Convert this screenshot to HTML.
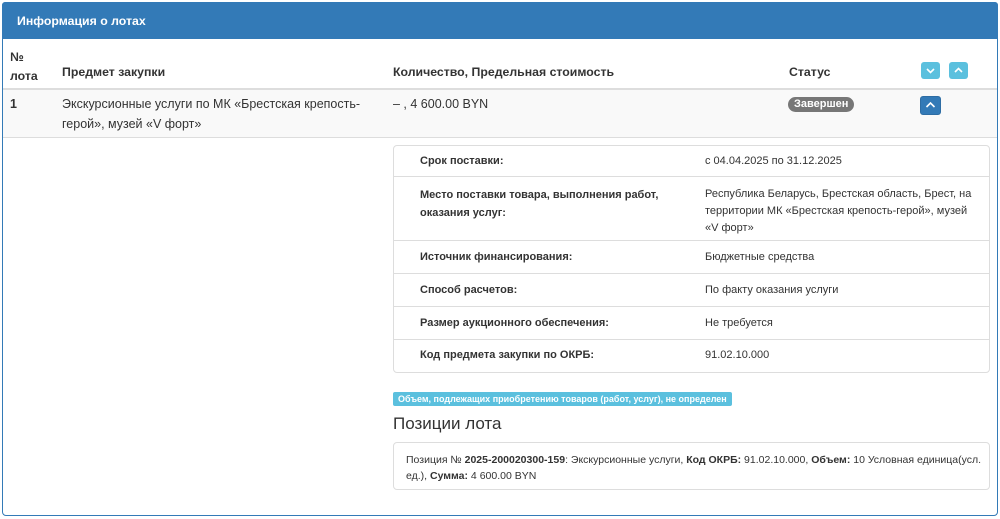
<!DOCTYPE html>
<html><head><meta charset="utf-8"><style>
*{box-sizing:border-box;margin:0;padding:0}
body{width:1000px;height:519px;background:#fff;font-family:"Liberation Sans",Arial,sans-serif;color:#333;position:relative;overflow:hidden}
.a{position:absolute}
.panel{left:2px;top:2px;width:996px;height:514px;border:1px solid #337ab7;border-radius:4px}
.hd{left:2px;top:2px;width:996px;height:37px;background:#337ab7;color:#fff;font-weight:bold;font-size:12.3px;padding:12px 0 0 15px;border-radius:3px 3px 0 0}
.th{font-weight:bold;font-size:12.3px}
.td{font-size:12.5px;line-height:20px}
.btn{width:19px;height:17px;border-radius:3px}
.lbl{font-weight:bold;font-size:11px;color:#333}
.val{font-size:11px;line-height:16px}
.line{height:1px;background:#ddd}
</style></head><body>
<div class="a panel"></div>
<div class="a hd">Информация о лотах</div>
<div class="a th" style="left:10px;top:48px;line-height:19px">№<br>лота</div>
<div class="a th" style="left:62px;top:65px">Предмет закупки</div>
<div class="a th" style="left:393px;top:65px">Количество, Предельная стоимость</div>
<div class="a th" style="left:789px;top:65px">Статус</div>
<div class="a btn" style="left:921px;top:62px;background:#5bc0de"><svg width="19" height="17"><path d="M6 7l3.5 3.5L13 7" stroke="#fff" stroke-width="1.6" fill="none"/></svg></div>
<div class="a btn" style="left:949px;top:62px;background:#5bc0de"><svg width="19" height="17"><path d="M6 10l3.5-3.5L13 10" stroke="#fff" stroke-width="1.6" fill="none"/></svg></div>
<div class="a line" style="left:3px;top:88px;width:994px;height:2px"></div>
<div class="a" style="left:3px;top:90px;width:994px;height:47px;background:#f9f9f9"></div>
<div class="a line" style="left:3px;top:137px;width:994px"></div>
<div class="a td" style="left:10px;top:94px;font-weight:bold">1</div>
<div class="a td" style="left:62px;top:94px;width:310px">Экскурсионные услуги по МК «Брестская крепость-герой», музей «V форт»</div>
<div class="a td" style="left:393px;top:94px">– , 4 600.00 BYN</div>
<div class="a" style="left:788px;top:97px;background:#777;color:#fff;font-weight:bold;font-size:11px;padding:1px 6px 2px;border-radius:8px">Завершен</div>
<div class="a btn" style="left:920px;top:96px;width:21px;height:19px;background:#337ab7;border:1px solid #2e6da4"><svg width="19" height="17"><path d="M5.5 10l4-4 4 4" stroke="#fff" stroke-width="1.6" fill="none"/></svg></div>

<div class="a" style="left:393px;top:145px;width:597px;height:228px;border:1px solid #ddd;border-radius:4px"></div>
<div class="a line" style="left:394px;top:176px;width:595px"></div>
<div class="a line" style="left:394px;top:240px;width:595px"></div>
<div class="a line" style="left:394px;top:273px;width:595px"></div>
<div class="a line" style="left:394px;top:306px;width:595px"></div>
<div class="a line" style="left:394px;top:339px;width:595px"></div>
<div class="a lbl" style="left:420px;top:155px">Срок поставки:</div>
<div class="a val" style="left:705px;top:153px">с 04.04.2025 по 31.12.2025</div>
<div class="a lbl" style="left:420px;top:186px;line-height:18px;width:260px">Место поставки товара, выполнения работ, оказания услуг:</div>
<div class="a val" style="left:705px;top:186px;width:270px;line-height:17px">Республика Беларусь, Брестская область, Брест, на территории МК «Брестская крепость-герой», музей «V форт»</div>
<div class="a lbl" style="left:420px;top:251px">Источник финансирования:</div>
<div class="a val" style="left:705px;top:249px">Бюджетные средства</div>
<div class="a lbl" style="left:420px;top:284px">Способ расчетов:</div>
<div class="a val" style="left:705px;top:282px">По факту оказания услуги</div>
<div class="a lbl" style="left:420px;top:317px">Размер аукционного обеспечения:</div>
<div class="a val" style="left:705px;top:315px">Не требуется</div>
<div class="a lbl" style="left:420px;top:349px">Код предмета закупки по ОКРБ:</div>
<div class="a val" style="left:705px;top:347px">91.02.10.000</div>

<div class="a" style="left:393px;top:392px;background:#5bc0de;color:#fff;font-weight:bold;font-size:9px;padding:2px 5px;border-radius:2px;height:14px">Объем, подлежащих приобретению товаров (работ, услуг), не определен</div>
<div class="a" style="left:393px;top:414px;font-size:17px;color:#333">Позиции лота</div>
<div class="a" style="left:393px;top:442px;width:597px;height:48px;border:1px solid #ddd;border-radius:4px;padding:9px 12px;font-size:10.5px;line-height:16px;white-space:nowrap">Позиция № <b>2025-200020300-159</b>: Экскурсионные услуги, <b>Код ОКРБ:</b> 91.02.10.000, <b>Объем:</b> 10 Условная единица(усл.<br>ед.), <b>Сумма:</b> 4 600.00 BYN</div>
</body></html>
